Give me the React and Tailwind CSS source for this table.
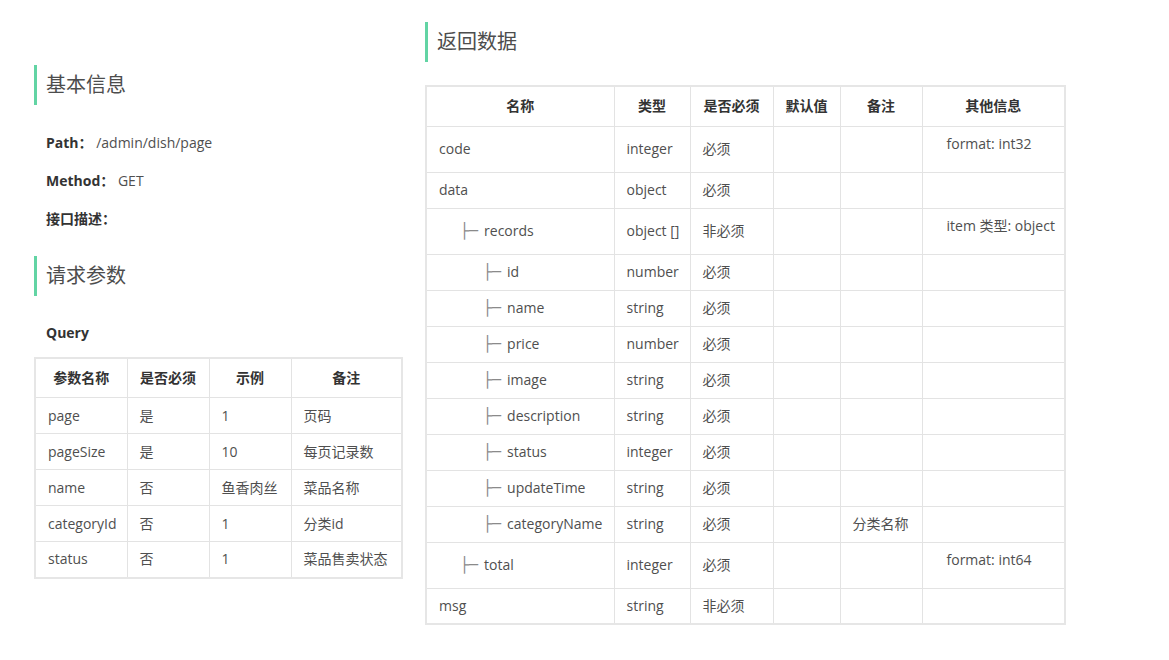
import React from "react";

const QUERY = [
  ["page", "是", "1", "页码"],
  ["pageSize", "是", "10", "每页记录数"],
  ["name", "否", "鱼香肉丝", "菜品名称"],
  ["categoryId", "否", "1", "分类id"],
  ["status", "否", "1", "菜品售卖状态"],
];

// level: 0 = root, 1 = child, 2 = grandchild
const FIELDS = [
  { name: "code", level: 0, type: "integer", req: "必须", note: "", other: "format: int32" },
  { name: "data", level: 0, type: "object", req: "必须", note: "", other: "" },
  { name: "records", level: 1, type: "object []", req: "非必须", note: "", other: "item 类型: object" },
  { name: "id", level: 2, type: "number", req: "必须", note: "", other: "" },
  { name: "name", level: 2, type: "string", req: "必须", note: "", other: "" },
  { name: "price", level: 2, type: "number", req: "必须", note: "", other: "" },
  { name: "image", level: 2, type: "string", req: "必须", note: "", other: "" },
  { name: "description", level: 2, type: "string", req: "必须", note: "", other: "" },
  { name: "status", level: 2, type: "integer", req: "必须", note: "", other: "" },
  { name: "updateTime", level: 2, type: "string", req: "必须", note: "", other: "" },
  { name: "categoryName", level: 2, type: "string", req: "必须", note: "分类名称", other: "" },
  { name: "total", level: 1, type: "integer", req: "必须", note: "", other: "format: int64" },
  { name: "msg", level: 0, type: "string", req: "非必须", note: "", other: "" },
];

const th = "border border-[#e3e3e3] px-3 py-2 leading-[22px] font-bold text-[#333] text-center";
const td = "border border-[#e3e3e3] px-3 py-2 h-[36px] leading-[18px] align-middle";

function Heading({ children }) {
  return (
    <div className="h-10 flex items-center border-l-[3px] border-[#62d4a4] pl-[9px] text-[20px] text-[#4d4d4d]">
      {children}
    </div>
  );
}

function Tree({ level }) {
  if (level === 0) return null;
  return (
    <span
      className="text-[#8a8a8a] mr-[6px] text-[15px] leading-[18px]"
      style={{ fontFamily: '"DejaVu Sans Mono", monospace' }}
    >
      ├─
    </span>
  );
}

export default function App() {
  return (
    <div
      className="w-[1169px] h-[660px] bg-white text-[14px] text-[#4f4f4f] flex items-start gap-[22px] pl-[34px]"
      style={{ fontFamily: '"Open Sans", "Noto Sans CJK SC", sans-serif' }}
    >
      {/* left column */}
      <div className="w-[369px] mt-[65px]">
        <Heading>基本信息</Heading>
        <div className="pl-3 leading-5">
          <p className="mt-[28px]">
            <b className="text-[#333]">Path：</b> /admin/dish/page
          </p>
          <p className="mt-[18px]">
            <b className="text-[#333]">Method：</b> GET
          </p>
          <p className="mt-[18px]">
            <b className="text-[#333]">接口描述：</b>
          </p>
        </div>
        <div className="mt-[27px]">
          <Heading>请求参数</Heading>
        </div>
        <p className="pl-3 mt-[27px] leading-5 font-bold text-[#333]">Query</p>
        <table className="mt-[14px] w-full table-fixed border-collapse border-2 border-[#e6e6e6]">
          <colgroup>
            <col className="w-[92px]" />
            <col className="w-[82px]" />
            <col className="w-[82px]" />
            <col />
          </colgroup>
          <thead>
            <tr>
              <th className={`${th} h-[39px]`}>参数名称</th>
              <th className={`${th} h-[39px]`}>是否必须</th>
              <th className={`${th} h-[39px]`}>示例</th>
              <th className={`${th} h-[39px]`}>备注</th>
            </tr>
          </thead>
          <tbody>
            {QUERY.map((r) => (
              <tr key={r[0]}>
                {r.map((c, i) => (
                  <td key={i} className={`${td} whitespace-nowrap`}>{c}</td>
                ))}
              </tr>
            ))}
          </tbody>
        </table>
      </div>

      {/* right column */}
      <div className="w-[641px] mt-[22px]">
        <Heading>返回数据</Heading>
        <table className="mt-[23px] w-full table-fixed border-collapse border-2 border-[#e6e6e6]">
          <colgroup>
            <col className="w-[188px]" />
            <col className="w-[76px]" />
            <col className="w-[83px]" />
            <col className="w-[67px]" />
            <col className="w-[82px]" />
            <col />
          </colgroup>
          <thead>
            <tr>
              {["名称", "类型", "是否必须", "默认值", "备注", "其他信息"].map((h) => (
                <th key={h} className={`${th} h-[40px]`}>{h}</th>
              ))}
            </tr>
          </thead>
          <tbody>
            {FIELDS.map((f) => (
              <tr key={f.name + f.level}>
                <td className={td}>
                  <div className={`whitespace-nowrap ${f.level === 2 ? "pl-[44px]" : f.level === 1 ? "pl-[21px]" : ""}`}>
                    <Tree level={f.level} />
                    {f.name}
                  </div>
                </td>
                <td className={`${td} whitespace-nowrap`}>{f.type}</td>
                <td className={td}>{f.req}</td>
                <td className={td}></td>
                <td className={td}>{f.note}</td>
                <td className={`${td} pl-6`}>
                  {f.other && <div className="mb-[11px] whitespace-nowrap">{f.other}</div>}
                </td>
              </tr>
            ))}
          </tbody>
        </table>
      </div>
    </div>
  );
}
